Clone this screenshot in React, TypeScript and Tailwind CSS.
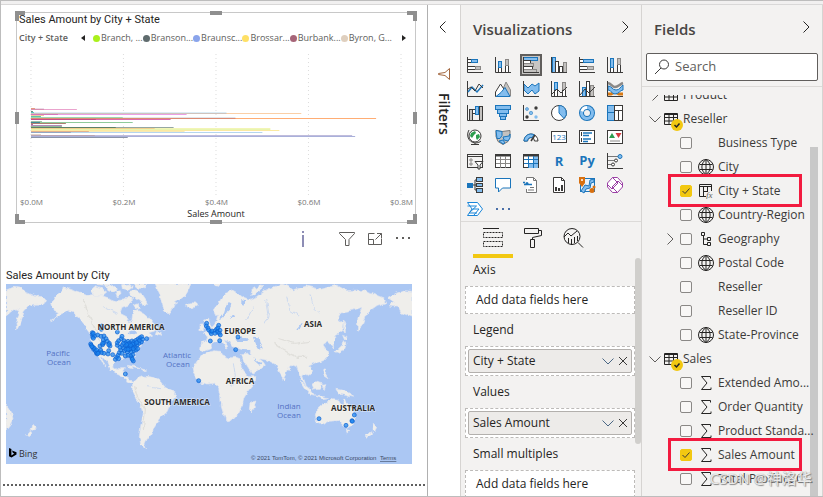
import { type ReactNode } from 'react';
import clsx from 'clsx';

const INK = '#3b3a39';
const BLUE = '#1b75bb';
const SKY = '#83bdee';
const GRAY = '#c4c2c0';

/* ---------- Bar chart ---------- */

// [y, end, color]: every bar starts at the zero line
const bars: [number, number, string][] = [
  [108, 44, '#ecdcea'],
  [108, 35, '#e59a83'],
  [109, 77, '#eaa3cd'],
  [109, 44, '#d98fb0'],
  [111, 33, '#6b8f7a'],
  [112, 227, '#dcecf5'],
  [112, 34, '#5cc7c0'],
  [113, 302, '#fbcfa6'],
  [113, 227, '#cfc3bd'],
  [114, 187, '#eaa0e6'],
  [114, 58, '#d477bd'],
  [115, 44, '#f3c9a0'],
  [116, 41, '#5fc6a6'],
  [117, 236, '#e3e6ea'],
  [117, 123, '#9dd6b1'],
  [118, 377, '#ffad74'],
  [118, 236, '#dd8a72'],
  [119, 171, '#dd6cb0'],
  [119, 96, '#c54e8c'],
  [121, 42, '#9fbfa6'],
  [122, 133, '#8fcb9b'],
  [122, 40, '#3d8c94'],
  [123, 66, '#b07d72'],
  [124, 33, '#b06a94'],
  [125, 62, '#b289bb'],
  [126, 62, '#93b897'],
  [127, 174, '#95a7a2'],
  [127, 116, '#5d8069'],
  [128, 271, '#f3f5b6'],
  [128, 155, '#f3d18e'],
  [129, 271, '#e8f5b0'],
  [130, 280, '#fbeaa2'],
  [131, 185, '#f8e9b5'],
  [131, 89, '#e3b28e'],
  [132, 263, '#b5d5ee'],
  [132, 71, '#92a7c4'],
  [134, 41, '#e2d6c9'],
  [135, 353, '#c0bcdc'],
  [135, 95, '#b9a4b4'],
  [136, 356, '#a9b0da'],
  [137, 128, '#8b94a9'],
];

const legend = [
  { label: 'Branch, ...', dot: 'bg-[#aaf01c]' },
  { label: 'Branson...', dot: 'bg-[#5f6b6d]' },
  { label: 'Braunsc...', dot: 'bg-[#8aa4eb]' },
  { label: 'Brossar...', dot: 'bg-[#fee066]' },
  { label: 'Burbank...', dot: 'bg-[#a66478]' },
  { label: 'Byron, G...', dot: 'bg-[#dfcfbe]' },
];

function Handle({ className }: { className: string }) {
  return <span className={clsx('absolute border-[#8f8f8f]', className)} />;
}

function BarChartCard() {
  return (
    <section className="relative ml-[15px] mr-[11px] mt-[7px] flex h-[211px] flex-col border border-[#c8c8c8] bg-white">
      <Handle className="-left-[2px] -top-[2px] size-[10px] border-l-4 border-t-4" />
      <Handle className="-right-[2px] -top-[2px] size-[10px] border-r-4 border-t-4" />
      <Handle className="-bottom-[2px] -left-[2px] size-[10px] border-b-4 border-l-4" />
      <Handle className="-bottom-[2px] -right-[2px] size-[10px] border-b-4 border-r-4" />
      <Handle className="-top-[2px] left-1/2 w-3 -translate-x-1/2 border-t-4" />
      <Handle className="-bottom-[2px] left-1/2 w-3 -translate-x-1/2 border-t-4" />
      <Handle className="-left-[2px] top-1/2 h-3 -translate-y-1/2 border-l-4" />
      <Handle className="-right-[2px] top-1/2 h-3 -translate-y-1/2 border-l-4" />

      <h2 className="relative px-[2px] font-[Roboto] text-[11px] leading-[14px] text-[#252423]">
        Sales Amount by City + State
      </h2>

      <div className="mt-[3px] flex h-4 items-center pl-[2px] pr-[9px] text-[9px] text-[#605e5c]">
        <span className="w-[62px] font-semibold">City + State</span>
        <button aria-label="Previous legend items" className="mr-2">
          <svg width="4" height="6" viewBox="0 0 4 6" fill="#252423"><path d="M4 0v6L0 3z" /></svg>
        </button>
        <ul className="flex min-w-0 flex-1 justify-between pr-[10px]">
          {legend.map(item => (
            <li key={item.label} className="flex items-center whitespace-nowrap">
              <span className={clsx('mr-px size-[7px] rounded-full', item.dot)} />
              {item.label}
            </li>
          ))}
        </ul>
        <button aria-label="Next legend items">
          <svg width="4" height="6" viewBox="0 0 4 6" fill="#252423"><path d="M0 0v6l4-3z" /></svg>
        </button>
      </div>

      <svg viewBox="17 46 399 150" className="w-full flex-1" preserveAspectRatio="none">
        {[31, 123.7, 216.5, 309.2, 402].map(x => (
          <line key={x} x1={x} x2={x} y1="54" y2="195" stroke="#dcdcdc" strokeDasharray="1 3" />
        ))}
        {bars.map(([y, end, color], i) => (
          <rect key={i} x="31" y={y} width={end - 31} height="1" fill={color} />
        ))}
      </svg>
      <div className="flex justify-between pl-[3px] pr-[2px] text-[8px] leading-3 text-[#777]">
        {['$0.0M', '$0.2M', '$0.4M', '$0.6M', '$0.8M'].map(t => <span key={t}>{t}</span>)}
      </div>
      <p className="mb-[2px] text-center text-[9px] leading-3 text-[#252423]">Sales Amount</p>
    </section>
  );
}

/* ---------- Map ---------- */

const land = [
  // Chukotka
  'M18 60L40 52L62 55L82 68L100 76L125 80L140 96L128 102L105 103L86 108L72 125L68 140L58 165L50 180L48 160L56 140L60 120L45 116L30 128L18 138Z',
  // North and Central America
  'M155 98L165 84L178 68L195 53L225 64L260 76L290 72L320 82L346 92L372 90L384 78L398 86L388 104L366 112L360 130L380 140L388 156L396 150L398 130L412 118L430 128L446 142L462 162L474 176L462 184L446 188L458 198L440 206L426 216L416 236L402 252L405 276L396 272L384 262L356 268L343 276L341 292L350 300L362 290L373 290L368 304L382 308L380 322L398 332L394 338L378 330L366 318L346 308L332 298L324 280L312 266L302 256L308 272L318 288L306 278L294 256L280 246L270 226L272 194L262 180L250 160L238 142L220 128L202 122L184 132L166 146L152 152L172 136L178 126L164 122L158 110Z',
  // Arctic islands
  'M270 62L284 50L306 56L320 66L306 78L284 76Z',
  'M318 50L344 46L352 58L338 66L324 62Z',
  'M346 66L362 62L366 74L352 80Z',
  'M368 44L388 42L398 52L386 60L370 56Z',
  'M388 64L408 60L428 74L440 92L446 106L430 104L418 94L404 84L392 78Z',
  'M400 106L414 102L418 112L406 116Z',
  'M290 42L330 42L322 48L300 48Z',
  'M396 42L440 42L428 56L410 54Z',
  // Greenland
  'M466 42L572 42L566 62L554 80L538 90L524 100L514 124L504 131L491 116L485 96L480 74Z',
  'M560 102L572 98L588 99L590 108L576 116L562 111Z',
  // Newfoundland, Caribbean
  'M470 184L484 188L480 198L466 194Z',
  'M382 286L404 290L420 296L404 295L388 291Z',
  'M420 296L440 300L430 304Z',
  // South America
  'M398 338L412 326L432 318L460 322L480 334L494 350L526 366L526 380L512 396L502 424L482 444L472 460L460 476L450 495L440 510L433 526L438 537L422 525L418 500L424 460L430 430L424 410L408 390L397 362Z',
  // Africa
  'M608 254L626 246L646 242L662 244L664 254L686 264L708 262L720 266L724 290L738 312L746 320L768 320L764 338L746 360L732 384L726 410L715 432L700 448L682 455L673 440L664 410L662 380L655 352L644 340L620 342L598 334L582 308L580 292L592 272Z',
  'M756 392L768 390L764 410L756 426L748 418L750 402Z',
  // Eurasia
  'M605 213L602 236L612 243L628 238L636 222L650 215L664 212L678 230L684 238L682 224L672 210L690 216L700 234L712 240L714 232L732 236L752 238L750 252L724 254L732 274L746 298L756 312L776 302L796 286L790 276L778 266L800 270L818 278L830 286L838 308L850 327L860 302L880 286L890 290L898 312L908 332L918 346L908 318L914 312L928 318L938 302L926 288L944 280L970 272L986 254L980 240L970 226L986 216L996 226L1001 234L1000 214L1012 190L1026 178L1030 160L1014 146L1022 126L1060 120L1086 112L1074 144L1072 180L1086 166L1096 142L1112 120L1132 106L1160 98L1150 84L1120 72L1080 60L1040 62L1010 46L960 58L920 48L880 60L862 48L846 42L820 50L790 64L770 80L748 90L732 84L718 74L694 60L672 74L656 98L640 120L644 136L656 136L652 152L640 168L626 182L610 190L626 200L622 212Z',
  // British Isles
  'M614 150L626 148L630 164L640 180L628 188L612 188L622 176L616 164Z',
  'M600 166L610 164L610 180L600 182Z',
  // Novaya Zemlya, Svalbard
  'M752 74L760 60L780 48L790 50L770 64L760 78Z',
  'M640 42L662 42L656 52L644 50Z',
  // Japan
  'M1004 244L1016 236L1026 226L1030 212L1038 222L1032 240L1014 248Z',
  'M1028 196L1044 200L1034 210Z',
  'M1030 150L1036 164L1036 188L1030 178Z',
  // South-east Asia
  'M900 332L914 344L930 358L944 376L930 372L914 354Z',
  'M936 346L952 334L964 338L958 358L942 360Z',
  'M946 378L972 380L986 384L966 386Z',
  'M966 346L978 344L972 362Z',
  'M968 296L978 298L976 314L984 326L972 318Z',
  'M1008 358L1026 360L1048 370L1058 382L1036 376L1018 372Z',
  'M850 322L856 326L854 334L849 330Z',
  // Australia, Tasmania, New Zealand
  'M950 420L966 406L984 396L998 386L1014 388L1020 400L1030 404L1036 386L1046 408L1060 424L1066 442L1058 464L1042 474L1028 468L1014 452L986 454L966 462L950 456L946 436Z',
  'M1038 480L1046 480L1042 490Z',
  'M1120 460L1130 472L1124 484L1116 478Z',
  'M1114 482L1118 490L1104 502L1098 498Z',
  'M18 402L34 426L39 446L28 468L18 480Z',
  'M98 462L108 472L102 484L94 480Z',
  'M92 480L98 488L84 500L80 494Z',
  // Alaska again past the date line
  'M1238 64L1214 62L1188 70L1164 84L1180 94L1168 108L1196 112L1204 128L1238 142Z',
];

const water = [
  'M660 150L672 140L682 124L690 116L694 100L686 96L676 116L672 130L664 138Z',
  'M690 140L704 136L700 142L690 146Z',
  'M706 206L722 198L748 210L738 216L712 216Z',
  'M762 200L776 202L778 216L788 234L776 236L766 218Z',
  'M720 262L728 280L744 304L752 318L744 318L734 300L722 280Z',
  'M764 264L776 274L790 280L780 284L766 272Z',
  'M386 186L404 180L412 190L400 196L390 194Z',
  'M892 176L906 158L908 162L898 178Z',
  'M724 90L736 94L734 104L724 100Z',
];

const places: [number, number][] = [
  [306, 168], [304, 178], [352, 186], [440, 206], [376, 312], [596, 332],
  [277, 188], [277, 194], [278, 201], [284, 198], [293, 195], [303, 199], [312, 198], [272, 222], [274, 226], [279, 232],
  [281, 238], [286, 243], [289, 249], [292, 252], [296, 246], [302, 241], [305, 248], [312, 250], [300, 228], [308, 224],
  [312, 218], [310, 210], [318, 206], [322, 214], [328, 220], [330, 228], [326, 242], [324, 252], [338, 254], [346, 268],
  [280, 190], [280, 205], [283, 235], [290, 240], [294, 250], [326, 224], [308, 220], [276, 230],
  [350, 262], [354, 256], [358, 248], [356, 266], [362, 240], [352, 226], [352, 218], [356, 212], [364, 206], [366, 199],
  [372, 212], [378, 218], [384, 214], [390, 219], [396, 213], [402, 216], [408, 211], [414, 207], [420, 203], [425, 200],
  [428, 208], [424, 216], [417, 220], [411, 226], [406, 232], [400, 228], [394, 232], [388, 228], [382, 232], [376, 228],
  [370, 234], [366, 226], [374, 242], [382, 246], [388, 240], [394, 246], [402, 242], [408, 240], [413, 236], [398, 254],
  [392, 258], [384, 256], [376, 258], [366, 250], [396, 264], [400, 273], [397, 268], [360, 232], [378, 238], [390, 236],
  [418, 212], [404, 222], [386, 222], [410, 218], [380, 224], [398, 222], [392, 226], [384, 238], [400, 236], [370, 220],
  [620, 160], [619, 168], [624, 174], [626, 180], [632, 186], [634, 191], [636, 183], [646, 182], [650, 177], [656, 166],
  [654, 174], [660, 181], [652, 186], [658, 190], [661, 195], [645, 190], [631, 213], [659, 212], [714, 201], [707, 239],
  [957, 446], [1063, 435], [1056, 452], [1057, 454], [1038, 466],
];

function MapLabel({ x, y, sea, children }: { x: number; y: number; sea?: boolean; children: string }) {
  return (
    <text
      x={x}
      y={y}
      textAnchor="middle"
      fontSize="8"
      fontWeight={sea ? 400 : 700}
      fill={sea ? '#5472c4' : '#2b2b2b'}
      stroke={sea ? 'none' : '#fff'}
      strokeOpacity="0.6"
      strokeWidth="1"
      paintOrder="stroke"
    >
      {children}
    </text>
  );
}

function MapCard() {
  return (
    <section className="mr-[15px] ml-[5px]">
      <h2 className="font-[Roboto] text-[11px] leading-4 text-[#252423]">Sales Amount by City</h2>
      <svg viewBox="0 0 406 180" className="block w-full">
        <defs>
          <filter id="coast" x="0" y="0" width="100%" height="100%">
            <feTurbulence type="fractalNoise" baseFrequency="0.16" numOctaves="3" seed="4" />
            <feDisplacementMap in="SourceGraphic" scale="5" xChannelSelector="R" yChannelSelector="G" />
          </filter>
        </defs>
        <rect width="406" height="180" fill="#abc7f3" />
        <g filter="url(#coast)">
          <g transform="translate(-6 -14) scale(0.33333)">
            {land.map(d => <path key={d} d={d} fill="#efeeeb" stroke="#e2e6ee" strokeWidth="2" />)}
            {water.map(d => <path key={d} d={d} fill="#abc7f3" />)}
            <path
              d="M820 220L850 240L890 262L920 262M838 206L880 220L930 214M250 90L268 140L286 180L300 220L318 256M404 350L414 386L436 420L430 480"
              fill="none"
              stroke="#e0dfdb"
              strokeWidth="4"
            />
            <path
              d="M800 90L806 130L796 160M860 80L870 120L900 140M930 70L940 110L960 130M760 110L740 150M700 280L706 320L694 350M440 350L480 356M310 110L350 130"
              fill="none"
              stroke="#b9cff2"
              strokeWidth="2"
            />
          </g>
        </g>
        <g transform="translate(-6 -14) scale(0.33333)">
          {places.map(([x, y]) => (
            <circle key={`${x}-${y}`} cx={x} cy={y} r="6" fill="#1a85f0" fillOpacity="0.72" stroke="#0b5fd0" strokeWidth="2" />
          ))}
        </g>
        <MapLabel x={125} y={46}>NORTH AMERICA</MapLabel>
        <MapLabel x={171} y={121}>SOUTH AMERICA</MapLabel>
        <MapLabel x={234} y={50}>EUROPE</MapLabel>
        <MapLabel x={307} y={43}>ASIA</MapLabel>
        <MapLabel x={234} y={100}>AFRICA</MapLabel>
        <MapLabel x={347} y={127}>AUSTRALIA</MapLabel>
        <MapLabel sea x={52} y={72}>Pacific</MapLabel>
        <MapLabel sea x={53} y={81}>Ocean</MapLabel>
        <MapLabel sea x={171} y={74}>Atlantic</MapLabel>
        <MapLabel sea x={172} y={83}>Ocean</MapLabel>
        <MapLabel sea x={283} y={125}>Indian</MapLabel>
        <MapLabel sea x={283} y={134}>Ocean</MapLabel>
        <path d="M3 164l2.400 1v6.400l3-1.800-1.500-.7-.9-2.300 4.500 1.600v2.400l-5 3-2.500-1.400z" fill="#000" />
        <text x="13" y="173" fontSize="9" fill="#333">Bing</text>
        <text x="245" y="176" fontSize="6" fill="#3c4a66" fontFamily="Liberation Sans">
          © 2021 TomTom, © 2021 Microsoft Corporation
        </text>
        <text x="374" y="176" fontSize="6" fill="#3c4a66" fontFamily="Liberation Sans" textDecoration="underline">
          Terms
        </text>
      </svg>
    </section>
  );
}

function VisualToolbar() {
  return (
    <div className="mr-4 flex h-8 items-center justify-end text-[#605e5c]">
      <button aria-label="Info" className="mr-[34px]">
        <svg width="4" height="16" viewBox="0 0 4 16" fill="#8d8db5"><path d="M1 0h2v2H1zM1 4h2v12H1z" /></svg>
      </button>
      <button aria-label="Filters on this visual" className="mr-3">
        <svg width="16" height="16" viewBox="0 0 16 16" fill="none" stroke="currentColor">
          <path d="M.5 1.500h15v1L10 8.500V14.500H6.500V8.500L.5 2.500z" />
        </svg>
      </button>
      <button aria-label="Focus mode" className="mr-3">
        <svg width="16" height="16" viewBox="0 0 16 16" fill="none" stroke="currentColor">
          <path d="M7.500 2.500h-6v11h13v-6M1.500 8.500h5v5M8.500 8.500l6-6M10 2.500h4.500V7" />
        </svg>
      </button>
      <button aria-label="More options">
        <svg width="16" height="16" viewBox="0 0 16 16" fill="currentColor">
          <path d="M1 6h2v2H1zM7 6h2v2H7zM13 6h2v2h-2z" />
        </svg>
      </button>
    </div>
  );
}

/* ---------- Visualizations ---------- */

function Chevron({ dir, className }: { dir: 'left' | 'right' | 'down'; className?: string }) {
  const d = { left: 'M9.500 2.500L4 8l5.500 5.500', right: 'M5.500 2.500L11 8l-5.500 5.500', down: 'M2.500 5.500L8 11l5.500-5.500' }[dir];
  return (
    <svg width="16" height="16" viewBox="0 0 16 16" fill="none" stroke="currentColor" className={className}>
      <path d={d} />
    </svg>
  );
}

function Box({ x, y, w, h, fill = '#fff', stroke = INK }: { x: number; y: number; w: number; h: number; fill?: string; stroke?: string }) {
  return <rect x={x + 0.5} y={y + 0.5} width={w - 1} height={h - 1} fill={fill} stroke={stroke} />;
}

const axes = <path d="M.5 0v15.500H16" fill="none" stroke={INK} />;

const visuals: { name: string; art: ReactNode }[] = [
  { name: 'Stacked bar chart', art: <><Box x={0} y={2} w={5} h={4} /><Box x={4} y={2} w={7} h={4} fill={SKY} stroke={BLUE} /><Box x={0} y={9} w={9} h={4} /><Box x={8} y={9} w={6} h={4} fill={GRAY} stroke="#8a8886" />{axes}</> },
  { name: 'Stacked column chart', art: <><Box x={3} y={10} w={4} h={6} /><Box x={3} y={4} w={4} h={7} fill={SKY} stroke={BLUE} /><Box x={10} y={8} w={4} h={8} /><Box x={10} y={2} w={4} h={7} fill={GRAY} stroke="#8a8886" />{axes}</> },
  { name: 'Clustered bar chart', art: <><Box x={0} y={0} w={15} h={4} fill={SKY} stroke={BLUE} /><Box x={0} y={3} w={8} h={4} /><Box x={0} y={6} w={11} h={4} fill={GRAY} stroke="#8a8886" /><Box x={0} y={9} w={10} h={4} /><Box x={0} y={12} w={14} h={4} fill={GRAY} stroke="#8a8886" />{axes}</> },
  { name: 'Clustered column chart', art: <><Box x={1} y={0} w={4} h={16} fill={SKY} stroke={BLUE} /><Box x={4} y={4} w={4} h={12} /><Box x={8} y={9} w={4} h={7} /><Box x={12} y={5} w={4} h={11} fill={GRAY} stroke="#8a8886" />{axes}</> },
  { name: '100% stacked bar chart', art: <><Box x={0} y={2} w={5} h={4} /><Box x={4} y={2} w={11} h={4} fill={SKY} stroke={BLUE} /><Box x={0} y={9} w={9} h={4} /><Box x={8} y={9} w={7} h={4} fill={GRAY} stroke="#8a8886" />{axes}</> },
  { name: '100% stacked column chart', art: <><Box x={3} y={10} w={4} h={6} /><Box x={3} y={1} w={4} h={10} fill={SKY} stroke={BLUE} /><Box x={10} y={7} w={4} h={9} /><Box x={10} y={1} w={4} h={7} fill={GRAY} stroke="#8a8886" />{axes}</> },

  { name: 'Line chart', art: <>{axes}<path d="M1 11l4-5 5 5 6-7" fill="none" stroke={BLUE} strokeWidth="1.500" /><path d="M1 8l3-2 4 4 4-7 4 4" fill="none" stroke={INK} /></> },
  { name: 'Area chart', art: <><path d="M5 15l6-14 4.500 8v6z" fill={GRAY} stroke="#8a8886" /><path d="M.5 11l5-8 4 6-4 6.500h-5z" fill="#fff" stroke={INK} /><path d="M1 15.500l5-4 4-5 5 9z" fill={SKY} stroke={BLUE} /></> },
  { name: 'Stacked area chart', art: <><path d="M1 3l4 4 4-4 3 2 4-3v8l-4 3-3-4-4 4-4-4z" fill={SKY} stroke={BLUE} />{axes}</> },
  { name: 'Line and stacked column chart', art: <><Box x={3} y={8} w={4} h={8} /><Box x={3} y={1} w={4} h={8} fill={SKY} stroke={BLUE} /><Box x={11} y={8} w={4} h={8} /><Box x={11} y={1} w={4} h={8} fill={GRAY} stroke="#8a8886" />{axes}<path d="M1 13l5-5 4 4 6-6" fill="none" stroke={INK} /></> },
  { name: 'Line and clustered column chart', art: <><Box x={3} y={6} w={4} h={10} fill={SKY} stroke={BLUE} /><Box x={7} y={0} w={4} h={16} /><Box x={11} y={4} w={4} h={12} fill={GRAY} stroke="#8a8886" />{axes}<path d="M1 14l5-6 4 4 6-6" fill="none" stroke={INK} /></> },
  { name: 'Ribbon chart', art: <><path d="M1 13h3l4-2 4 2h4" fill="none" stroke="#d87a16" strokeWidth="3" /><path d="M1 2c4 1 4 4 7 4s5-3 8-4" fill="none" stroke="#8a8886" strokeWidth="2.500" /><path d="M1 5c4 0 4 4 8 4s4-3 7-5v5c-3 0-4 4-8 4s-3-4-7-4z" fill={SKY} stroke={BLUE} />{axes}</> },

  { name: 'Waterfall chart', art: <><Box x={2} y={4} w={4} h={12} fill={GRAY} /><Box x={5} y={4} w={4} h={5} /><Box x={8} y={1} w={4} h={9} fill={SKY} stroke={BLUE} /><Box x={12} y={1} w={4} h={15} fill={GRAY} />{axes}</> },
  { name: 'Funnel chart', art: <><Box x={0} y={0} w={16} h={5} fill={SKY} stroke={BLUE} /><Box x={2} y={4} w={12} h={5} fill={SKY} stroke={BLUE} /><Box x={4} y={8} w={8} h={4} fill={SKY} stroke={BLUE} /><Box x={5} y={11} w={6} h={4} fill={SKY} stroke={BLUE} /></> },
  { name: 'Scatter chart', art: <>{axes}<g fill={INK}><circle cx="13" cy="3" r="1.700" /><circle cx="4" cy="12" r="1.700" /><circle cx="13" cy="12" r="1.700" fill={SKY} /></g><g fill={SKY} stroke={BLUE} strokeWidth=".5"><circle cx="4" cy="4" r="1.500" /><circle cx="8" cy="8" r="1.700" /></g></> },
  { name: 'Pie chart', art: <><circle cx="8" cy="8" r="7.500" fill="#fff" stroke={INK} /><path d="M8 .5A7.500 7.500 0 0 1 13 13.500L8 8z" fill={SKY} stroke={BLUE} /></> },
  { name: 'Donut chart', art: <><circle cx="8" cy="8" r="5.500" fill="none" stroke={BLUE} strokeWidth="5" /><path d="M8 2.500a5.500 5.500 0 1 1-5.300 4" fill="none" stroke={SKY} strokeWidth="3" /><path d="M2.800 6.500A5.500 5.500 0 0 1 8 2.500" fill="none" stroke="#fff" strokeWidth="3" /></> },
  { name: 'Treemap', art: <><Box x={0} y={0} w={8} h={16} fill={SKY} stroke={BLUE} /><path d="M1 7.500h6" stroke={BLUE} /><Box x={7} y={0} w={9} h={6} /><Box x={7} y={5} w={5} h={11} /><Box x={11} y={5} w={5} h={11} /></> },

  { name: 'Map', art: <><circle cx="8" cy="7" r="6" fill="#fff" stroke={INK} /><path d="M4 4l4-2 1 2-2 2-2 3-2-2zM9 6l3-1 1 3-3 3-1-2z" fill="#2e9e4f" /><path d="M2 1C-1 6 1 13 8 14c3 0 5-1 6-2M8 14v1.500M4 15.500h8" fill="none" stroke={INK} /></> },
  { name: 'Filled map', art: <><path d="M1 1.500l6 1 8-1v6l-2 5-5 3-5-3-2-5z" fill={GRAY} stroke="#777" /><path d="M1 1.500l6 1v4l-2 3H2zM8 8l6-1 1-2v4l-2 3-4-1zM4 12l4-1 2 3-2 1z" fill={SKY} stroke={BLUE} /></> },
  { name: 'Gauge', art: <><path d="M1 12a7 7 0 0 1 14 0h-3.500a3.500 3.500 0 0 0-7 0z" fill="#fff" stroke={INK} /><path d="M1 12a7 7 0 0 1 10-6.300L9 8.600a3.500 3.500 0 0 0-4.500 3.400z" fill={SKY} stroke={BLUE} /><path d="M8 12l4-6" stroke={INK} strokeWidth="1.500" /></> },
  { name: 'Card', art: <><Box x={0} y={2} w={16} h={12} /><text x="8" y="11" textAnchor="middle" fontSize="8" fill={BLUE}>123</text></> },
  { name: 'Multi-row card', art: <><Box x={0} y={1} w={16} h={14} /><path d="M2.500 3v4M2.500 9v4" stroke={INK} /><path d="M4 4h9M4 6.500h6M4 10h8M4 12.500h5" stroke={BLUE} strokeWidth="1.500" /></> },
  { name: 'KPI', art: <><Box x={0} y={1} w={16} h={14} /><path d="M2 9l3-5 3 5z" fill="#2e9e4f" /><path d="M8.500 4h6l-3 5z" fill="#d5393f" /><path d="M3 12h10" stroke="#8a8886" /></> },

  { name: 'Slicer', art: <><Box x={0} y={1} w={16} h={14} fill="#f3f2f1" /><path d="M0 3.500h16" stroke={INK} /><path d="M3 6h2v2H3zM3 10h2v2H3z" fill="none" stroke="#8a8886" /><path d="M8 8.500h8l-3 3.500v4h-2v-4z" fill="#fff" stroke={INK} /></> },
  { name: 'Table', art: <><Box x={0} y={1} w={16} h={14} /><path d="M0 2.500h16" stroke={INK} strokeWidth="2" /><path d="M1 6.500h14M1 10.500h14M5.500 3v12M10.500 3v12" stroke="#8a8886" /></> },
  { name: 'Matrix', art: <><Box x={0} y={1} w={16} h={14} /><path d="M10 3h5v12h-5zM5 10h6v5H5z" fill={SKY} /><path d="M0 2.500h16" stroke={INK} strokeWidth="2" /><path d="M1 6.500h14M1 10.500h14M5.500 3v12M10.500 3v12" stroke={BLUE} /></> },
  { name: 'R script visual', art: <text x="8" y="13" textAnchor="middle" fontSize="13" fontWeight="700" fill={BLUE}>R</text> },
  { name: 'Python visual', art: <text x="8" y="12" textAnchor="middle" fontSize="13" fontWeight="700" fill={BLUE}>Py</text> },
  { name: 'Key influencers', art: <>{axes}<path d="M1 3.500h10M1 7.500h7M1 11.500h4" stroke="#777" /><circle cx="13" cy="3.500" r="2" fill={SKY} stroke={BLUE} /><circle cx="9" cy="7.500" r="1.500" fill="#fff" stroke={INK} /><circle cx="6" cy="11.500" r="1.500" fill="#fff" stroke={INK} /></> },

  { name: 'Decomposition tree', art: <><path d="M5 8h3M8 3v10M8 3h3M8 8h3M8 13h3" fill="none" stroke={INK} /><Box x={0} y={6} w={6} h={5} fill={BLUE} stroke={BLUE} /><Box x={9} y={0} w={7} h={5} fill={SKY} stroke={INK} /><Box x={9} y={6} w={7} h={4} fill={SKY} stroke={INK} /><Box x={9} y={11} w={7} h={5} fill={SKY} stroke={INK} /></> },
  { name: 'Q&A', art: <path d="M.5 1.500h15v9.500H7.500l-4 4V11h-3z" fill="#fff" stroke={BLUE} /> },
  { name: 'Smart narrative', art: <><path d="M3.500 3V.5h7l3 3v12h-10V12" fill="#fff" stroke="#777" /><path d="M10.500.5v3h3M7 10.500h4M5 13h6" fill="none" stroke="#777" /><path d="M1 7.500h8M0 5.500h2" stroke={BLUE} strokeWidth="1.500" /><circle cx="4" cy="6.500" r="1.500" fill={BLUE} /></> },
  { name: 'Paginated report', art: <><path d="M2.500.5h8l3 3v12h-11z" fill="#fff" stroke={INK} /><path d="M10.500.5v3h3" fill="none" stroke={INK} /><path d="M4 10h2v4H4zM7 11h2v3H7zM10 8h2v6h-2z" fill={INK} /></> },
  { name: 'ArcGIS map', art: <><Box x={1} y={1} w={15} h={14} fill="#e8f2fb" stroke={BLUE} /><path d="M2 14l4-6 4 1 1-6 4-1v3l-3 1-1 5-4 1-2 4z" fill={SKY} stroke={BLUE} /><path d="M0 0h6v6L3 10 0 6z" fill="#d8700f" /><circle cx="3" cy="3" r="1" fill="#fff" /><circle cx="13" cy="13.500" r="2.500" fill="#d8700f" /><circle cx="15" cy="10" r="1.500" fill="#d8700f" /></> },
  { name: 'Power Apps', art: <><path d="M5.500.5h5l5 5.500v4l-5 5.500h-5L.5 10V6z" fill="#fff" stroke="#9a3fa5" /><path d="M5.500.5L11 6 5 12 .5 7.500M10.500 15.500L5 10l6-6 4.500 4.500" fill="none" stroke="#9a3fa5" /></> },

  { name: 'Power Automate', art: <path d="M.5 1.500h10l5 6.500-5 6.500H.5L5 8zM.5 5h9L2 12h8M5.500 8H12L7 14" fill="#fff" stroke="#1a86d8" /> },
  { name: 'More visuals', art: <path d="M1 7h2v2H1zM7 7h2v2H7zM13 7h2v2h-2z" fill="#4a6fa8" /> },
];

function FieldWell({ label, value }: { label: string; value?: string }) {
  return (
    <div>
      <h3 className="py-[6px] pl-2 text-[12px] leading-5 text-[#252423]">{label}</h3>
      <div className="border border-dashed border-[#bdbbb9] bg-white p-[2px]">
        {value ? (
          <div className="flex h-6 items-center rounded-xs border border-[#b3b0ad] bg-[#edebe9] pl-1 text-[12px] text-[#252423]">
            <span className="flex-1">{value}</span>
            <button aria-label={`${value} options`} className="text-[#4a6785]"><Chevron dir="down" /></button>
            <button aria-label={`Remove ${value}`} className="pr-px">
              <svg width="14" height="14" viewBox="0 0 14 14" stroke={INK}><path d="M3 3l8 8M11 3l-8 8" /></svg>
            </button>
          </div>
        ) : (
          <p className="pl-2 text-[12px] leading-[22px] text-[#252423]">Add data fields here</p>
        )}
      </div>
    </div>
  );
}

function Visualizations() {
  return (
    <aside className="flex w-[181px] shrink-0 flex-col border-l border-[#d6d4d2] bg-[#f3f2f1]">
      <header className="flex h-12 shrink-0 items-center justify-between pl-3 pr-2">
        <h2 className="text-[15px] font-semibold text-[#484644]">Visualizations</h2>
        <button aria-label="Collapse visualizations" className="pb-1 text-[#252423]"><Chevron dir="right" /></button>
      </header>

      <div className="grid shrink-0 grid-cols-6 border-b border-[#dcdad8] pr-3">
        {visuals.map((v, i) => (
          <button key={v.name} aria-label={v.name} className="flex h-6 items-center justify-center">
            <span className={clsx('flex size-[22px] items-center justify-center', i === 2 && 'border-2 border-[#605e5c] bg-[#c8c6c4]')}>
              <svg width="16" height="16" viewBox="0 0 16 16" className="shrink-0 overflow-visible">{v.art}</svg>
            </span>
          </button>
        ))}
      </div>

      <nav className="flex h-9 shrink-0 pl-3 text-[#252423]">
        <button aria-label="Fields" className="flex w-10 items-center justify-center border-b-4 border-[#f2c811]">
          <svg width="20" height="20" viewBox="0 0 20 20" fill="none" stroke="currentColor">
            <path d="M0 .5h16" />
            <path d="M.5 4.500h19v5H.5zM.5 13.500h19v5H.5z" strokeDasharray="2 1" />
          </svg>
        </button>
        <button aria-label="Format" className="flex w-10 items-center justify-center pb-1">
          <svg width="20" height="20" viewBox="0 0 20 20" fill="none" stroke="currentColor">
            <path d="M1.500.5h14v5h-14zM15.500 2.500h3v5l-9 2v2M7.500 11.500h4v8h-4z" />
          </svg>
        </button>
        <button aria-label="Analytics" className="flex w-10 items-center justify-center pb-1">
          <svg width="21" height="20" viewBox="0 0 21 20" fill="none" stroke="currentColor">
            <circle cx="9" cy="8.500" r="8" />
            <path d="M15 14.500l5 5M1 9l4-4 3 3 6-5M5.500 10v5M8.500 11v6M11.500 9v6M14.500 8v5" />
          </svg>
        </button>
      </nav>

      <div className="flex min-h-0 flex-1 items-start overflow-hidden">
        <div className="-mt-1 min-w-0 flex-1 pl-1">
          <FieldWell label="Axis" />
          <FieldWell label="Legend" value="City + State" />
          <FieldWell label="Values" value="Sales Amount" />
          <FieldWell label="Small multiples" />
        </div>
        <div className="h-[78%] w-[6px] rounded-full bg-[#d0cfcc]" />
      </div>
    </aside>
  );
}

/* ---------- Fields ---------- */

type IconName = 'globe' | 'calc' | 'tree' | 'sum';

const fieldIcons: Record<IconName, ReactNode> = {
  globe: <path d="M8 .5a7.500 7.500 0 1 0 0 15 7.500 7.500 0 0 0 0-15zC2.500 4 2.500 12 8 15.500 13.500 12 13.500 4 8 .5M8 .5v15M1.500 5.500h13M1.500 10.500h13" />,
  calc: (
    <>
      <path d="M8 13.500H1.500v-12h12V8M1.500 3.500h12M5.500 3.500v10M9.500 3.500V9M6 8.500h4" />
      <text x="8" y="15" fontSize="9" fontStyle="italic" fill="#605e5c" stroke="none" fontFamily="Liberation Serif">fx</text>
    </>
  ),
  tree: <path d="M3.500 1.500h3v3h-3zM9.500 6.500h3v3h-3zM9.500 11.500h3v3h-3zM5.500 4.500v9h4M5.500 8h4" />,
  sum: <path d="M12.500 3.500v-2h-9L9 8l-5.500 6.500h9.500v-2" />,
};

interface Field {
  name: string;
  icon?: IconName;
  checked?: boolean;
  expandable?: boolean;
}

const resellerFields: Field[] = [
  { name: 'Business Type' },
  { name: 'City', icon: 'globe' },
  { name: 'City + State', icon: 'calc', checked: true },
  { name: 'Country-Region', icon: 'globe' },
  { name: 'Geography', icon: 'tree', expandable: true },
  { name: 'Postal Code', icon: 'globe' },
  { name: 'Reseller' },
  { name: 'Reseller ID' },
  { name: 'State-Province', icon: 'globe' },
];

const salesFields: Field[] = [
  { name: 'Extended Amo...', icon: 'sum' },
  { name: 'Order Quantity', icon: 'sum' },
  { name: 'Product Standa...', icon: 'sum' },
  { name: 'Sales Amount', icon: 'sum', checked: true },
  { name: 'Total Product C...', icon: 'sum' },
  { name: 'Unit Price', icon: 'sum' },
];

function TableRow({ name, open }: { name: string; open?: boolean }) {
  return (
    <button className="flex h-6 w-full items-center pl-[5px] text-left">
      <Chevron dir={open ? 'down' : 'right'} className="text-[#605e5c]" />
      <span className="relative ml-px mr-[5px] flex">
        <svg width="14" height="14" viewBox="0 0 14 14" fill="none" stroke="#252423">
          <path d="M.5 1.500h13v11H.5zM1 2.500h12M.5 5.500h13M.5 9h13M5 2v10.500M9.500 2v10.500" />
        </svg>
        {open && (
          <svg width="12" height="12" viewBox="0 0 12 12" className="absolute -bottom-[5px] -right-[5px]">
            <circle cx="6" cy="6" r="6" fill="#f2c811" />
            <path d="M3.500 6l2 2 3-3.500" fill="none" stroke="#252423" strokeWidth="1.500" />
          </svg>
        )}
      </span>
      {name}
    </button>
  );
}

function FieldRow({ field }: { field: Field }) {
  return (
    <div className="relative flex h-6 items-center pl-5">
      <span className="w-[18px]">{field.expandable && <Chevron dir="right" className="text-[#605e5c]" />}</span>
      <label className="flex items-center whitespace-nowrap">
        <span className="relative flex">
          <input
            type="checkbox"
            defaultChecked={field.checked}
            className="peer size-3 appearance-none rounded-xs border border-[#8a8886] bg-[#f8f7f6] checked:border-[#f2c811] checked:bg-[#f2c811]"
          />
          <svg viewBox="0 0 12 12" fill="none" stroke={INK} className="pointer-events-none absolute inset-0 hidden size-3 peer-checked:block">
            <path d="M2.500 6l2.500 2.500 4.500-5" />
          </svg>
        </span>
        <svg width="16" height="16" viewBox="0 0 16 16" fill="none" stroke="#252423" className="ml-[6px] mr-1">
          {field.icon && fieldIcons[field.icon]}
        </svg>
        {field.name}
      </label>
      {field.checked && <span className="absolute -bottom-1 -top-[5px] left-[26px] right-4 border-3 border-[#f21b3f]" />}
    </div>
  );
}

function Fields() {
  return (
    <aside className="relative flex w-[182px] shrink-0 flex-col border-x border-[#d6d4d2] bg-[#f3f2f1]">
      <header className="flex h-12 shrink-0 items-center justify-between pl-3 pr-2">
        <h2 className="text-[15px] font-semibold text-[#484644]">Fields</h2>
        <button aria-label="Collapse fields" className="pb-1 text-[#252423]"><Chevron dir="right" /></button>
      </header>
      <label className="mx-1 flex h-7 shrink-0 items-center rounded-xs border border-[#605e5c] bg-white pl-[7px]">
        <svg width="16" height="16" viewBox="0 0 16 16" fill="none" stroke={INK} className="shrink-0">
          <circle cx="10" cy="5.500" r="4.500" />
          <path d="M7 9l-6 6" />
        </svg>
        <input type="search" aria-label="Search" placeholder="Search" className="ml-[5px] w-full min-w-0 bg-transparent text-[13px] outline-none placeholder:text-[#605e5c]" />
      </label>
      <div className="mt-[5px] border-t border-[#dcdad8]" />

      <div className="mt-2 flex min-h-0 flex-1 overflow-hidden text-[12px] text-[#3b3a39]">
        <div className="-mt-3 min-w-0 flex-1">
          <TableRow name="Product" />
          <TableRow name="Reseller" open />
          {resellerFields.map(f => <FieldRow key={f.name} field={f} />)}
          <TableRow name="Sales" open />
          {salesFields.map(f => <FieldRow key={f.name} field={f} />)}
        </div>
        <div className="-ml-2 mr-1 mt-[52px] w-2 bg-[#c8c8c8]" />
      </div>

      <span className="absolute bottom-[6px] right-[10px] whitespace-nowrap text-[15px] leading-6 text-white/80 [text-shadow:1px_1px_1px_#888,0_0_1px_#888]">
        CSDN @神洛华
      </span>
    </aside>
  );
}

export default function App() {
  return (
    <div className="flex h-screen flex-col overflow-hidden border-b border-l border-[#bdbdbd] bg-white font-['Open_Sans','Noto_Sans_CJK_SC',sans-serif]">
      <div className="h-[5px] shrink-0 border-y border-b-[#d9d8d8] border-t-[#bdbdbd] bg-[#f1f0f0]" />
      <div className="flex min-h-0 flex-1">
        <main className="flex min-w-0 flex-1 flex-col border-r border-[#b0b0b0]">
          <BarChartCard />
          <VisualToolbar />
          <div className="mt-[13px]">
            <MapCard />
          </div>
          <div className="mx-[2px] mt-5">
            <svg className="block h-[2px] w-full">
              <line x1="0" x2="100%" y1="1" y2="1" stroke="#606060" strokeWidth="2" strokeDasharray="2 2" />
            </svg>
          </div>
        </main>

        <aside className="flex w-8 shrink-0 flex-col items-center pt-[14px] text-[#252423]">
          <button aria-label="Expand filters"><Chevron dir="left" /></button>
          <svg width="12" height="14" viewBox="0 0 12 14" fill="none" stroke="#a3673f" className="mt-8">
            <path d="M11.500 1.500v11L7 8.500L.5 7.500v-1L7 5.500z" />
          </svg>
          <h2 className="mt-3 text-[14px] font-semibold leading-4 [writing-mode:vertical-rl]">Filters</h2>
        </aside>

        <Visualizations />
        <Fields />
      </div>
    </div>
  );
}
